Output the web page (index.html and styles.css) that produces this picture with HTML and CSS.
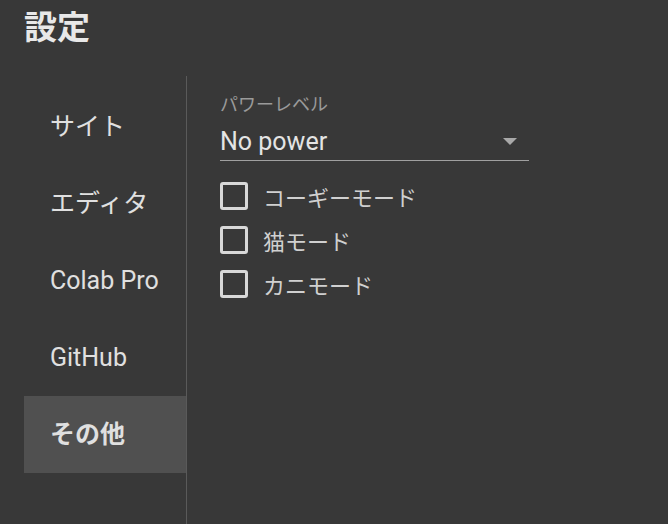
FILE: index.html
```html
<!DOCTYPE html>
<html lang="ja">

<head>
    <meta charset="UTF-8">
    <meta name="viewport" content="width=device-width, initial-scale=1.0">
    <title>設定</title>
    <link rel="stylesheet" href="styles.css">
</head>

<body>
    <h1 class="title">設定</h1>
    <main class="settings">
        <nav class="side">
            <div class="side-item">サイト</div>
            <div class="side-item">エディタ</div>
            <div class="side-item">Colab Pro</div>
            <div class="side-item">GitHub</div>
            <div class="side-item active">その他</div>
        </nav>
        <section class="panel">
            <div class="field">
                <span class="field-label">パワーレベル</span>
                <div class="select">
                    <span>No power</span>
                    <span class="arrow"></span>
                </div>
            </div>
            <label class="check"><span class="box"></span>コーギーモード</label>
            <label class="check"><span class="box"></span>猫モード</label>
            <label class="check"><span class="box"></span>カニモード</label>
        </section>
    </main>
</body>

</html>
```

FILE: styles.css
```css
body {
    margin: 0;
    height: 524px;
    background: #383838;
    color: #e0e0e0;
    font-family: Roboto, "Noto Sans CJK JP", sans-serif;
    overflow: hidden;
}

.title {
    margin: 0;
    padding: 8px 0 0 24px;
    height: 76px;
    box-sizing: border-box;
    font-size: 33px;
    font-weight: 700;
    line-height: 40px;
    color: #e8e8e8;
}

.settings {
    display: flex;
    height: 448px;
}

.side {
    width: 162px;
    margin-left: 24px;
    padding-top: 12px;
    border-right: 1px solid #5a5a5a;
}

.side-item {
    height: 77px;
    padding-left: 26px;
    display: flex;
    align-items: center;
    font-size: 25px;
    line-height: 30px;
    color: #e0e0e0;
}

.side-item.active {
    background: #505050;
    font-weight: 700;
}

.panel {
    padding: 18px 0 0 33px;
}

.field {
    width: 309px;
    margin-bottom: 13px;
}

.field-label {
    display: block;
    font-size: 18px;
    line-height: 22px;
    color: #9a9a9a;
}

.select {
    display: flex;
    justify-content: space-between;
    align-items: center;
    height: 37px;
    padding-top: 7px;
    border-bottom: 1px solid #a0a0a0;
    font-size: 25px;
    color: #e4e4e4;
}

.arrow {
    width: 0;
    height: 0;
    border-left: 7px solid transparent;
    border-right: 7px solid transparent;
    border-top: 7px solid #a8a8a8;
    margin-right: 12px;
}

.check {
    display: flex;
    align-items: center;
    height: 44px;
    font-size: 22px;
    color: #d0d0d0;
}

.box {
    width: 22px;
    height: 22px;
    border: 3px solid #d8d8d8;
    border-radius: 3px;
    margin-right: 15px;
}
```
